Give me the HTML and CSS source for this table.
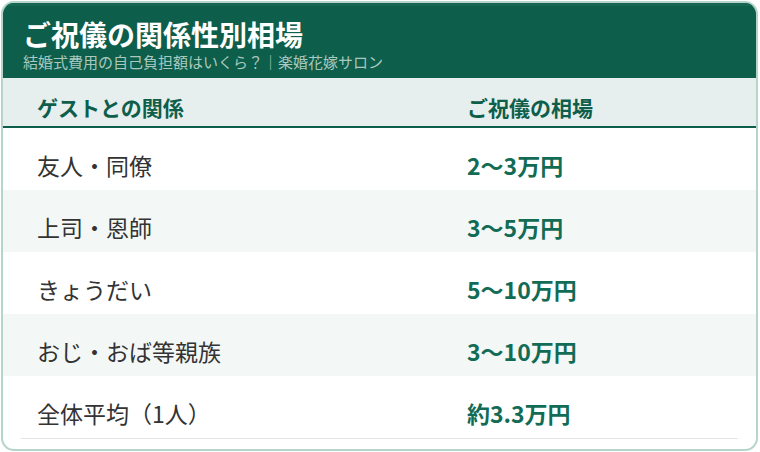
FILE: index.html
```html
<!DOCTYPE html>
<html lang="ja">
<head>
<meta charset="utf-8">
<link rel="stylesheet" href="styles.css">
</head>
<body>
<div class="card">
  <div class="header">
    <div class="title">ご祝儀の関係性別相場</div>
    <div class="subtitle">結婚式費用の自己負担額はいくら？｜楽婚花嫁サロン</div>
  </div>
  <div class="thead">
    <div class="th">ゲストとの関係</div>
    <div class="th">ご祝儀の相場</div>
  </div>
  <div class="row">
    <div class="rel">友人・同僚</div>
    <div class="amt">2〜3万円</div>
  </div>
  <div class="row alt">
    <div class="rel">上司・恩師</div>
    <div class="amt">3〜5万円</div>
  </div>
  <div class="row">
    <div class="rel">きょうだい</div>
    <div class="amt">5〜10万円</div>
  </div>
  <div class="row alt">
    <div class="rel">おじ・おば等親族</div>
    <div class="amt">3〜10万円</div>
  </div>
  <div class="row">
    <div class="rel">全体平均（1人）</div>
    <div class="amt">約3.3万円</div>
  </div>
  <div class="rule"></div>
</div>
</body>
</html>
```

FILE: styles.css
```css
* { box-sizing: border-box; }
html, body { margin: 0; padding: 0; background: #ffffff; }
body {
  font-family: "Noto Sans CJK JP", "Noto Sans", sans-serif;
  width: 760px;
  height: 452px;
  overflow: hidden;
}
.card {
  margin: 1px 0 0 1px;
  width: 757px;
  height: 450px;
  border: 2px solid #b5d5cb;
  border-radius: 13px;
  overflow: hidden;
  background: #ffffff;
}
.header {
  background: #0e5e4c;
  border-top: 3px solid #176654;
  padding: 12px 20px 6px 20px;
  height: 75px;
}
.title {
  color: #ffffff;
  font-size: 28px;
  font-weight: 700;
  line-height: 32px;
}
.subtitle {
  margin-top: 2px;
  color: #a9c9be;
  font-size: 15px;
  line-height: 20px;
}
.thead {
  display: grid;
  grid-template-columns: 430px 1fr;
  background: #e6efed;
  border-bottom: 2px solid #0e5e4c;
  height: 50px;
}
.th {
  padding: 15px 0 0 34px;
  font-size: 21px;
  font-weight: 700;
  line-height: 29px;
  color: #0e5e4c;
}
.row {
  display: grid;
  grid-template-columns: 430px 1fr;
  height: 62px;
  align-items: start;
}
.row.alt { background: #f3f8f7; }
.rel {
  padding: 21px 0 0 34px;
  font-size: 23px;
  line-height: 32px;
  color: #333333;
}
.amt {
  padding: 21px 0 0 34px;
  font-size: 23px;
  font-weight: 700;
  line-height: 32px;
  color: #126b54;
}
.rule {
  margin: 0 18px;
  border-top: 1px solid #e4e6e5;
}
```
